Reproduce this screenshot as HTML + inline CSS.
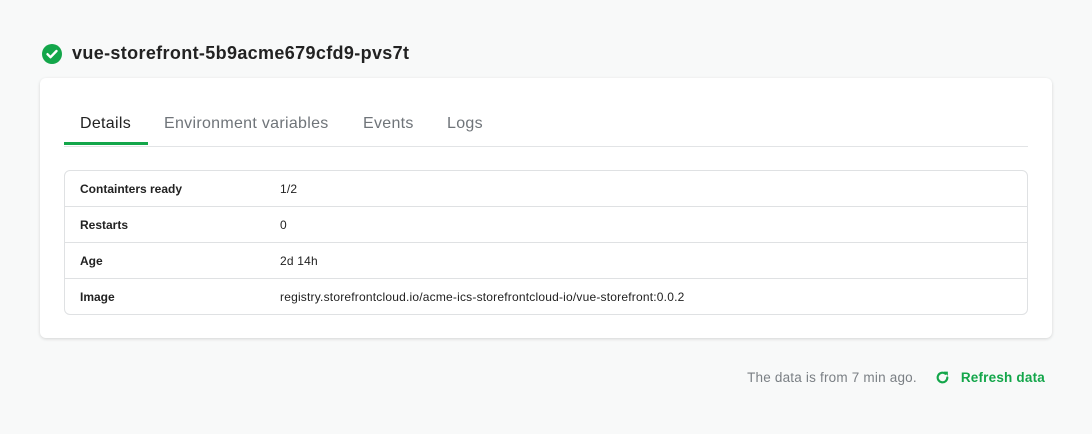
<!DOCTYPE html>
<html><head><style>
body{margin:0;width:1092px;height:434px;background:#f8f9f9;font-family:"Liberation Sans",sans-serif;position:relative;overflow:hidden;color:#1d1d1f}
.title{position:absolute;left:42px;top:43px;display:flex;align-items:center;font-size:18px;font-weight:600;color:#222;letter-spacing:0.35px}
.title svg{margin-right:10px}
.card{position:absolute;left:40px;top:78px;width:1012px;height:260px;background:#fff;border-radius:6px;box-shadow:0 1px 3px rgba(0,0,0,.15)}
.tabs{position:absolute;left:24px;top:0;width:964px;height:68px;border-bottom:1px solid #e2e4e6}
.tab{position:absolute;top:37px;font-size:16px;color:#6f7479;letter-spacing:0.3px}
.tab.a{color:#222}
.ul{position:absolute;left:0;top:64px;width:84px;height:3px;background:#13a64a}
table{position:absolute;left:24px;top:92px;width:964px;border:1px solid #dfe1e3;border-radius:6px;border-collapse:separate;border-spacing:0;font-size:12px;letter-spacing:0.2px}
td{height:35px;padding:0;border-bottom:1px solid #dfe1e3;color:#222}
tr:last-child td{border-bottom:0}
td:first-child{padding-left:15px;width:200px;font-weight:bold;letter-spacing:0}
.foot{position:absolute;right:47px;top:370px;font-size:13.5px;display:flex;align-items:center;letter-spacing:0.2px}
.foot .t{color:#7a7f84;margin-right:18px}
.foot .r{color:#13a64a;font-weight:bold;display:flex;align-items:center}
.foot svg{margin-right:11px}
</style></head><body>
<div class="title"><svg width="20" height="20" viewBox="0 0 20 20"><circle cx="10" cy="10" r="10" fill="#13a64a"/><path d="M5.5 10.2l3 3 6-6.2" stroke="#fff" stroke-width="2.4" fill="none" stroke-linecap="round" stroke-linejoin="round"/></svg>vue-storefront-5b9acme679cfd9-pvs7t</div>
<div class="card">
<div class="tabs">
<span class="tab a" style="left:16px">Details</span>
<span class="tab" style="left:100px">Environment variables</span>
<span class="tab" style="left:299px">Events</span>
<span class="tab" style="left:383px">Logs</span>
<div class="ul"></div>
</div>
<table>
<tr><td>Containters ready</td><td>1/2</td></tr>
<tr><td>Restarts</td><td>0</td></tr>
<tr><td>Age</td><td>2d 14h</td></tr>
<tr><td>Image</td><td>registry.storefrontcloud.io/acme-ics-storefrontcloud-io/vue-storefront:0.0.2</td></tr>
</table>
</div>
<div class="foot"><span class="t">The data is from 7 min ago.</span><span class="r"><svg width="15" height="15" viewBox="0 0 14 14"><path d="M11.5 7A4.5 4.5 0 1 1 9.8 3.5" stroke="#13a64a" stroke-width="2" fill="none" stroke-linecap="round"/><path d="M8 1.5h4v4z" fill="#13a64a"/></svg>Refresh data</span></div>
</body></html>
